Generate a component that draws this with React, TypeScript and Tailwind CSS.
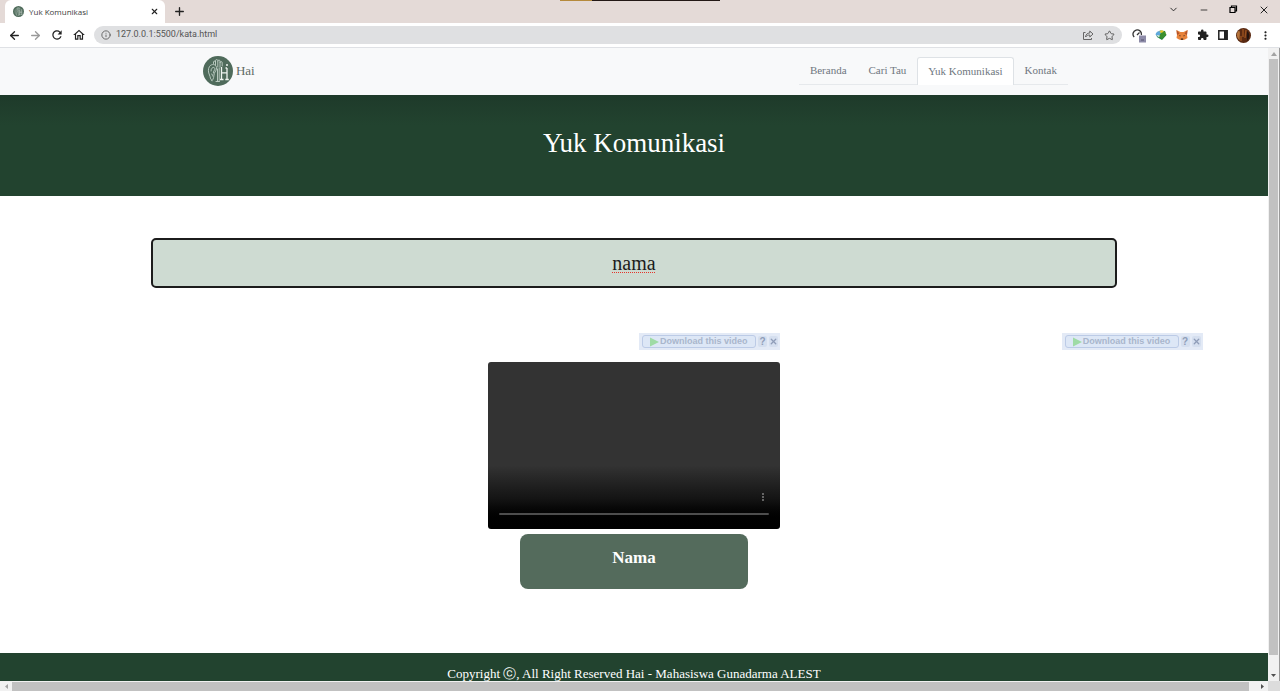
import React from "react";
import {
  ArrowLeft,
  ArrowRight,
  ChevronDown,
  Info,
  Minus,
  Plus,
  Star,
  X,
} from "lucide-react";
import { MdExtension, MdMoreVert, MdOutlineHome, MdRefresh } from "react-icons/md";

function Logo({ className }: { className: string }) {
  return (
    <svg viewBox="0 0 30 30" className={className} aria-hidden="true">
      <circle cx="15" cy="15" r="15" fill="#4f6b5b" />
      <g fill="none" stroke="#c3d2c8" strokeWidth=".9" strokeLinecap="round" strokeLinejoin="round">
        <path d="M9 24.500C7 23.500 7.500 21 6.500 19 5.300 16.500 4.800 13 6.500 10.500 8.500 7.500 13 8 13.500 11.500c.3 2.500-1.500 4-2.200 6-.6 2-.3 6-2.300 7z" />
        <path d="M8 15c-.3-3 3-5 3.800-2.500.4 1.800-1.800 2.500-1.500 4.500M8.500 18c1 0 1.500.8 1 2" />
        <path d="M10.500 7.500V6c0-1.200 2-1.200 2 0v3M12.500 6V4.500c0-1.200 2.300-1.200 2.300 0V11M14.800 5c0-1.200 2.200-1.200 2.200 0v6M17 6.500c0-1.200 2.200-1.200 2.200 0V10" />
        <path d="M14.500 13v12M16.200 12v12.500M13 25.500h3.500" />
      </g>
      <g fill="none" stroke="#f0f5f1" strokeWidth="1.300">
        <path d="M18.500 11v12M24 12v11M18.500 16.800H24M17 23.500h3.500M22.300 23.500h3.500M22.500 12H24" />
        <circle cx="24" cy="9" r="1" fill="#eef4f0" stroke="none" />
      </g>
    </svg>
  );
}

const iconButton = "flex items-center justify-center text-[#222]";

function TabStrip() {
  return (
    <div className="relative flex h-[23px] shrink-0 items-stretch bg-[#e4dad7]">
      <div className="absolute left-[560px] top-0 flex h-px w-40">
        <span className="w-8 bg-[#b58a3c]" />
        <span className="flex-1 bg-[#231815]" />
      </div>
      <div className="ml-[5px] flex w-[160px] items-center rounded-t-md bg-white pl-2 pr-1.5">
        <Logo className="size-[11px]" />
        <span className="ml-[5px] flex-1 text-[8px] text-[#3c3c3c]">Yuk Komunikasi</span>
        <button type="button" aria-label="Close tab" className={iconButton}>
          <X size={9} strokeWidth={3} />
        </button>
      </div>
      <button type="button" aria-label="New tab" className={`${iconButton} ml-2`}>
        <Plus size={13} strokeWidth={2.5} />
      </button>
      <div className="ml-auto flex items-center gap-5 pb-1 pr-2.5">
        <button type="button" aria-label="Search tabs" className={iconButton}>
          <ChevronDown size={11} strokeWidth={2} />
        </button>
        <button type="button" aria-label="Minimize" className={iconButton}>
          <Minus size={10} strokeWidth={2} />
        </button>
        <button type="button" aria-label="Restore" className={iconButton}>
          <svg width="9" height="9" viewBox="0 0 9 9" fill="none" stroke="#000" strokeWidth="1.200">
            <path d="M1 2.500h5v5H1zM2.500 2.500V1h5v5H6" />
          </svg>
        </button>
        <button type="button" aria-label="Close" className={iconButton}>
          <X size={12} strokeWidth={2} />
        </button>
      </div>
    </div>
  );
}

function Extensions() {
  return (
    <div className="flex items-center gap-2 pl-2.5">
      <button type="button" aria-label="Speed monitor" className={iconButton}>
        <svg width="15" height="16" viewBox="0 0 15 16">
          <path d="M2.200 10A4.200 4.200 0 1 1 9.300 8" fill="none" stroke="#333" strokeWidth="1.300" />
          <path d="M5 8L7.500 5.500" stroke="#333" strokeWidth="1.300" />
          <rect x="7" y="8.500" width="7" height="7" fill="#8d8ba8" />
          <path d="M9 13h3" stroke="#55536f" />
        </svg>
      </button>
      <div className="flex items-center gap-[9px]">
        <button type="button" aria-label="Download manager" className={iconButton}>
          <svg width="12" height="12" viewBox="0 0 12 12">
            <path d="M1 5L5 1.500 10 2l1.500 4-4.500 5L2 8z" fill="#23803a" />
            <path d="M.5 5.500C1 3 3 2 5 2l2 2-4 4z" fill="#5fa8dc" />
            <path d="M4.500 2.500L7 1l4 3.500-4 1z" fill="#e5c72d" />
            <path d="M6 4l3.500-1.500L11 6 7 10 4 7z" fill="#3a8f2e" />
            <path d="M1.500 6l3.500.5L4 8.500z" fill="#d8ecd8" />
          </svg>
        </button>
        <button type="button" aria-label="Wallet" className={iconButton}>
          <svg width="12" height="12" viewBox="0 0 12 12">
            <path d="M.5 1L4.500 3h3l4-2-.5 5 .5 3-2.500 1.500L7.500 11h-3L3 10.500.5 9 1 6z" fill="#e8833a" />
            <path d="M.5 1l3 3.500L1 6zM11.500 1l-3 3.500L11 6z" fill="#b4532a" />
            <path d="M3 6l1.800.8L4 7.500zM9 6l-1.800.8.8.7zM4.800 9.500h2.400L7 10.800H5z" fill="#33251f" />
          </svg>
        </button>
        <button type="button" aria-label="Extensions" className={iconButton}>
          <MdExtension size={12} />
        </button>
        <button type="button" aria-label="Side panel" className={iconButton}>
          <svg width="10" height="10" viewBox="0 0 10 10">
            <path d="M.8.800h8.400v8.400H.8z" fill="none" stroke="#222" strokeWidth="1.500" />
            <path d="M6 1h3v8H6z" fill="#222" />
          </svg>
        </button>
      </div>
      <button type="button" aria-label="Profile" className={iconButton}>
        <svg width="15" height="15" viewBox="0 0 15 15">
          <circle cx="7.500" cy="7.500" r="7.500" fill="#5a2a12" />
          <path d="M3 2.500c2 2 0 6 1 10l-2-2C0 7 1 4 3 2.500z" fill="#b5733a" />
          <path d="M7 1v8M10 2l-1 8M5 8v5" stroke="#9a5220" strokeWidth="1.400" />
          <path d="M11 3c3 2 3 7 0 10z" fill="#241410" />
        </svg>
      </button>
      <button type="button" aria-label="Menu" className={iconButton}>
        <MdMoreVert size={13} />
      </button>
    </div>
  );
}

function Toolbar() {
  return (
    <div className="flex h-[25px] shrink-0 items-center border-b border-[#dfe1e5] bg-white pl-2 pr-2">
      <div className="flex items-center gap-2">
        <button type="button" aria-label="Back" className={iconButton}>
          <ArrowLeft size={13} strokeWidth={2.5} />
        </button>
        <button type="button" aria-label="Forward" className="flex text-[#999]">
          <ArrowRight size={13} strokeWidth={2.5} />
        </button>
        <button type="button" aria-label="Reload" className={iconButton}>
          <MdRefresh size={14} />
        </button>
        <button type="button" aria-label="Home" className={iconButton}>
          <MdOutlineHome size={14} />
        </button>
      </div>
      <div className="ml-2 flex h-[18px] flex-1 items-center rounded-full bg-[#dfe0e2] px-[7px]">
        <Info size={10} className="text-[#555]" />
        <input
          aria-label="Address"
          defaultValue="127.0.0.1:5500/kata.html"
          className="ml-[5px] flex-1 bg-transparent font-[Roboto] text-[9px] text-[#555] outline-none"
        />
        <button type="button" aria-label="Share" className="flex">
          <svg width="12" height="12" viewBox="0 0 12 12" fill="none" stroke="#666" strokeWidth="1">
            <path d="M3.500 3.500H1.500v7h8V9" />
            <path d="M3.500 8c.3-2.500 1.800-4 4.300-4V2l3.200 3-3.200 3V6C6 6 4.700 6.500 3.500 8z" />
          </svg>
        </button>
        <button type="button" aria-label="Bookmark" className="ml-2.5 flex text-[#555]">
          <Star size={11} />
        </button>
      </div>
      <Extensions />
    </div>
  );
}

const links = ["Beranda", "Cari Tau", "Yuk Komunikasi", "Kontak"];

function SiteNav() {
  return (
    <header className="flex h-[47px] shrink-0 items-center justify-between bg-[#f8f9fa] pb-0.5 pl-[16%] pr-[200px]">
      <a href="#home" className="flex items-center gap-[3px] text-[13px] text-[#5f6b66]">
        <Logo className="size-[30px]" />
        Hai
      </a>
      <nav className="flex h-7 items-stretch text-[11px] text-[#6f7780]">
        {links.map((label) => (
          <a
            key={label}
            href="#page"
            className={
              label === "Yuk Komunikasi"
                ? "flex items-center rounded-t-[3px] border border-b-0 border-[#dee2e6] bg-white px-2.5"
                : "flex items-center border-b border-[#e6e9ec] px-[11px] pt-px"
            }
          >
            {label}
          </a>
        ))}
      </nav>
    </header>
  );
}

function DownloadBar() {
  return (
    <div className="flex h-[17px] w-[141px] items-center gap-0.5 self-end bg-[#e3eaf6] pl-[3px] pr-0.5 font-['Liberation_Sans'] text-[9px] font-bold text-[#a9b6cc]">
      <button
        type="button"
        className="flex h-[13px] flex-1 items-center gap-px whitespace-nowrap rounded-[3px] border border-[#bccbe6] bg-[#dde7f6] pl-1.5"
      >
        <svg width="10" height="10" viewBox="0 0 10 10" className="shrink-0">
          <path d="M1 0.500L10 5 1 9.500z" fill="#9fdba6" />
        </svg>
        Download this video
      </button>
      <button type="button" aria-label="Help" className="flex h-[11px] w-[9px] items-center justify-center rounded-xs bg-[#d5dfef] text-[10px] text-[#8f9db8]">
        ?
      </button>
      <button type="button" aria-label="Close" className="flex h-[11px] w-[9px] items-center justify-center rounded-xs bg-[#d5dfef] text-[#8f9db8]">
        <X size={9} strokeWidth={3.5} />
      </button>
    </div>
  );
}

function Player() {
  return (
    <div className="flex h-[167px] w-full flex-col justify-end rounded-[3px] bg-linear-to-b from-[#333] from-62% via-[#141414] via-82% to-black px-[11px] pb-[14px]">
      <button type="button" aria-label="Video options" className="mb-2.5 flex self-end text-[#777]">
        <MdMoreVert size={12} />
      </button>
      <div className="h-0.5 rounded-full bg-[#4d4d4d]" />
    </div>
  );
}

function VerticalScrollbar() {
  return (
    <div className="flex w-3 shrink-0 flex-col items-center border-r border-[#999] bg-[#f1f1f1]">
      <div className="flex h-[11px] items-center">
        <svg width="6" height="4" viewBox="0 0 6 4">
          <path d="M0 4l3-4 3 4z" fill="#a3a3a3" />
        </svg>
      </div>
      <div className="w-[9px] flex-1 bg-[#c1c1c1]" />
      <div className="flex h-[26px] items-end pb-1">
        <svg width="5" height="3" viewBox="0 0 5 3">
          <path d="M0 0h5L2.500 3z" fill="#505050" />
        </svg>
      </div>
    </div>
  );
}

function HorizontalScrollbar() {
  return (
    <div className="flex h-[10px] shrink-0 items-stretch bg-[#f1f1f1]">
      <div className="flex w-3 items-center justify-center">
        <svg width="3" height="5" viewBox="0 0 3 5">
          <path d="M3 0v5L0 2.500z" fill="#a3a3a3" />
        </svg>
      </div>
      <div className="mt-px flex-1 bg-[#c1c1c1]" />
      <div className="flex w-[19px] items-center justify-end pr-1">
        <svg width="3" height="5" viewBox="0 0 3 5">
          <path d="M0 0v5l3-2.500z" fill="#505050" />
        </svg>
      </div>
      <div className="w-3 bg-[#dcdcdc]" />
    </div>
  );
}

export default function App() {
  return (
    <div className="flex h-screen flex-col overflow-hidden bg-white font-['Open_Sans',sans-serif]">
      <TabStrip />
      <Toolbar />
      <div className="flex min-h-0 flex-1">
        <div className="flex min-w-0 flex-1 flex-col overflow-hidden font-['Liberation_Serif',serif]">
          <SiteNav />
          <main className="flex flex-1 flex-col">
            <div className="flex h-[101px] shrink-0 items-center justify-center bg-linear-to-b from-[#1e3a2a] to-[#22432f] to-30% pb-1">
              <h1 className="text-[27px] text-white">Yuk Komunikasi</h1>
            </div>
            <div className="mt-[42px] px-[151px]">
              <input
                aria-label="Kata"
                defaultValue="nama"
                spellCheck={false}
                className="h-[50px] w-full rounded-[5px] border-2 border-[#1c1c1c] bg-[#cedbd2] text-center text-[20px] text-[#1c1c1c] underline decoration-[#e5342b] decoration-dotted decoration-1 underline-offset-2 outline-none"
              />
            </div>
            <div className="mt-[45px] grid grid-cols-3 justify-items-center">
              <div />
              <section className="flex w-[292px] flex-col items-center">
                <DownloadBar />
                <div className="mt-3 w-full">
                  <Player />
                </div>
                <div className="mt-[5px] flex h-[55px] w-[228px] justify-center rounded-lg bg-[#546b5c] pt-[11px]">
                  <h2 className="text-[17px] font-bold text-white">Nama</h2>
                </div>
              </section>
              <section className="flex w-[292px] flex-col">
                <DownloadBar />
              </section>
            </div>
          </main>
          <footer className="flex h-[28px] shrink-0 items-start justify-center bg-[#22432f] pt-[11px] text-[13px] text-white">
            Copyright ⓒ, All Right Reserved Hai - Mahasiswa Gunadarma ALEST
          </footer>
        </div>
        <VerticalScrollbar />
      </div>
      <HorizontalScrollbar />
    </div>
  );
}
